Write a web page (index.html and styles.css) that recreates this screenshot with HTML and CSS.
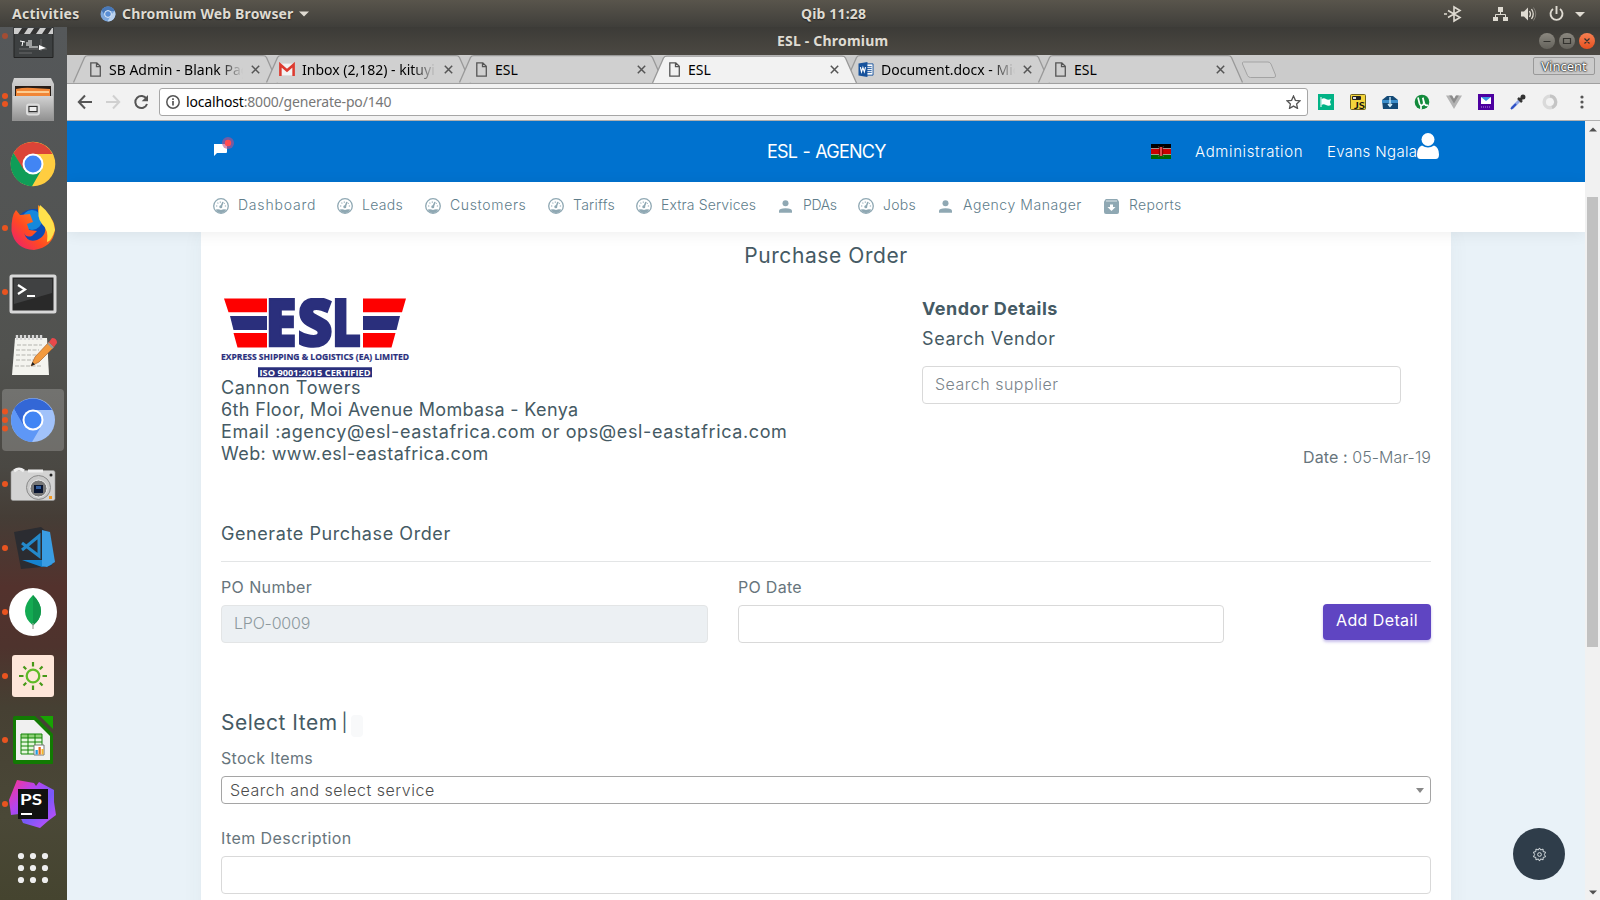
FILE: index.html
```html
<!DOCTYPE html>
<html lang="en">
<head>
<meta charset="utf-8">
<title>ESL - Chromium</title>
<link rel="stylesheet" href="styles.css">
</head>
<body>
<svg class="defs" width="0" height="0">
  <defs>
    <linearGradient id="steel" x1="0" y1="0" x2="0" y2="1"><stop offset="0" stop-color="#d2d2d2"/><stop offset="1" stop-color="#929292"/></linearGradient>
    <linearGradient id="fox" x1="0" y1="1" x2="1" y2="0"><stop offset="0" stop-color="#e8177c"/><stop offset=".4" stop-color="#ff4a22"/><stop offset="1" stop-color="#ffb010"/></linearGradient>
    <linearGradient id="storm" x1="0" y1="0" x2="1" y2="1"><stop offset="0" stop-color="#ff318c"/><stop offset=".35" stop-color="#b345f1"/><stop offset=".6" stop-color="#765af8"/><stop offset="1" stop-color="#d249fc"/></linearGradient>
    <linearGradient id="knob" x1="0" y1="0" x2="0" y2="1"><stop offset="0" stop-color="#8b8880"/><stop offset="1" stop-color="#64625b"/></linearGradient>
    <linearGradient id="knobred" x1="0" y1="0" x2="0" y2="1"><stop offset="0" stop-color="#f78052"/><stop offset="1" stop-color="#e5501f"/></linearGradient>
    <symbol id="tab" viewBox="0 0 206 28"><path d="M0.500 27.500L11.500 2.500Q12.500 .7 15 .7H190Q192.500 .7 193.500 2.500L204.500 27.500"/></symbol>
    <symbol id="file" viewBox="0 0 11 15"><path d="M.8.800h6l3.500 3.500v9.900H.8zM6.500.8v3.800h3.800" fill="none" stroke="#555" stroke-width="1.300"/></symbol>
    <symbol id="close" viewBox="0 0 9 9"><path d="M.8.800l7.400 7.400M8.200.8L.8 8.200" stroke="#555" stroke-width="1.500"/></symbol>
    <symbol id="gauge" viewBox="0 0 16 16"><circle cx="8" cy="8" r="7.300" fill="none" stroke="#8fa8b3" stroke-width="1.300"/><path d="M2.600 11.500Q5.500 10.800 6.500 11.500Q8 12.400 9.500 11.500Q10.500 10.800 13.400 11.500Q11.500 15 8 15Q4.500 15 2.600 11.500z" fill="#8fa8b3"/><path d="M9.800 4.500L8 9" stroke="#8fa8b3" stroke-width="1.600" stroke-linecap="round"/><circle cx="7.800" cy="8.800" r="1.500" fill="#8fa8b3"/><path d="M3 8h1.300M11.800 8h1.300M4.500 4.600l.8.900M7.300 3.500v1.200M11.700 5l-.5.600" stroke="#8fa8b3" stroke-width="1.100"/></symbol>
    <symbol id="person" viewBox="0 0 13 13"><circle cx="6.500" cy="3.300" r="3" fill="#8fa8b3"/><path d="M0 12.700V11Q0 8.200 6.500 8.200T13 11v1.700z" fill="#8fa8b3"/></symbol>
    <symbol id="archive" viewBox="0 0 15 15"><path d="M1.800 0h11.400L15 2.500V13q0 2-2 2H2q-2 0-2-2V2.500z" fill="#8fa8b3"/><path d="M2 2h11" stroke="#dfe7ea"/><path d="M6 5.500h3V8h2.500l-4 4-4-4H6z" fill="#fff"/></symbol>
  </defs>
</svg>

<header class="topbar">
  <span class="activities">Activities</span>
  <svg class="app-icon" viewBox="0 0 16 16"><circle cx="8" cy="8" r="7.500" fill="#7ba6dc"/><path d="M1.500 4.300A7.500 7.500 0 0 1 14.800 5H8L4.600 9z" fill="#4878b8"/><path d="M14.800 5A7.500 7.500 0 0 1 7.500 15.500L11 9z" fill="#b9d2f0"/><circle cx="8" cy="8" r="3.400" fill="#5a8fd6" stroke="#e5effa" stroke-width="1"/></svg>
  <span class="app-name">Chromium Web Browser</span>
  <svg class="caret" viewBox="0 0 10 6"><path d="M0 .5h10L5 5.500z" fill="#dfdbd2"/></svg>
  <span class="clock">Qib 11:28</span>
  <svg class="tray" viewBox="0 0 146 18" fill="none" stroke="#dfdbd2">
    <path d="M2 5.500l12 7-6 3.500V2l6 3.500-12 7M-2 9h3" stroke-width="1.600"/>
    <path d="M52 2h5v5h-5zM47 12h5v4h-5zM57 12h5v4h-5z" fill="#dfdbd2" stroke="none"/><path d="M54.500 7v2.500M49.500 12V9.500h10V12"/>
    <path d="M75 6.500h3l4-4v13l-4-4h-3z" fill="#dfdbd2" stroke="none"/><path d="M83.500 6q2 3 0 6M85.500 4q3.500 5 0 10" stroke-width="1.300"/><path d="M87.500 2.500q4.500 6.500 0 13" stroke="#817e77"/>
    <path d="M107 4a6 6 0 1 0 7 0M110.500 1v8" stroke-width="1.900"/>
    <path d="M129 7h10l-5 5z" fill="#dfdbd2" stroke="none"/>
  </svg>
</header>

<div class="desktop">
  <aside class="dock">
    <svg viewBox="0 0 67 64"><circle cx="5" cy="32" r="3" fill="#a34d34"/><path d="M14 10h39v43.500H14z" fill="#3d4041" stroke="#222"/><path d="M14 24h39v6H14z" fill="#ccc"/><path d="M18 30l4-6h6l-4 6zM30 30l4-6h6l-4 6zM42 30l4-6h6l-4 6z" fill="#333"/><path d="M19 45h28M19 49h13M41 35v12" stroke="#777" stroke-width=".8"/><path d="M20 37l5 1M23 37l-1 5M27 38v4M29 36v6M31 36v6M29 43h9" stroke="#fff" fill="none"/><path d="M39 41l7 3-7 2z" fill="#fff"/></svg>
    <svg viewBox="0 0 67 64"><circle cx="5" cy="28" r="3"/><circle cx="5" cy="36" r="3"/><path d="M14 10h37l3 6v37H12V16z" fill="url(#steel)"/><path d="M15 18h36v12H15z" fill="#271d17"/><path d="M16 21q9-2 17-1l17 1v9H16z" fill="#f18636"/><path d="M17 24h32" stroke="#ffe3b0" stroke-width="1.500"/><path d="M13 28h40v24H13z" fill="url(#steel)"/><rect x="27" y="36.500" width="12" height="10" rx="2" fill="#aaa" stroke="#ddd" stroke-width="2"/><rect x="29" y="38.500" width="8" height="5" fill="#eee" stroke="#333"/></svg>
    <svg viewBox="0 0 67 64"><circle cx="33" cy="32" r="22.300" fill="#ffcd40"/><path d="M13.500 21A22.300 22.300 0 0 1 52.500 22H33V32L23 38z" fill="#db4437"/><path d="M13.500 21A22.300 22.300 0 0 0 32 54.300L42 37 24 38z" fill="#0f9d58"/><circle cx="33" cy="32" r="10.500" fill="#fff"/><circle cx="33" cy="32" r="8.500" fill="#4285f4"/></svg>
    <svg viewBox="0 0 67 64"><circle cx="5" cy="32" r="3"/><circle cx="34" cy="32" r="19" fill="#0b4bb5"/><circle cx="32" cy="24" r="10" fill="#1488dc"/><path d="M16 14l4 5 10-1 3 8-6 2 2 6 8 1-5 5q-6 2-8-3 3 10 13 7 12-5 7-20-7-4-6-15 5 4 9 9 8 6 8 16Q53 51 34 54 15 53 11.500 35 11 20 16 14z" fill="url(#fox)"/><path d="M40 9q13 10 15 25-4 12-8 12 2-12-5-18-6-7-2-19z" fill="#ffe14c"/></svg>
    <svg viewBox="0 0 67 64"><circle cx="5" cy="32" r="3"/><rect x="11" y="16" width="44" height="36" rx="1" fill="#292929" stroke="#d8d8d8" stroke-width="3"/><path d="M14 19h38v14L14 44z" fill="#404142"/><path d="M18 25l7 4.500-7 4.500M27 36h8" stroke="#fff" stroke-width="2.200" fill="none"/></svg>
    <svg viewBox="0 0 67 64"><path d="M15 14h32l2 37H12z" fill="#f4f4ef"/><path d="M17 11v5M21 11v5M25 11v5M29 11v5M33 11v5M37 11v5M41 11v5" stroke="#d8d8d8" stroke-width="2.400"/><path d="M17 21h25M16 26h23M16 31h21M16 36h20M15 42h26" stroke="#b3b3ad" stroke-dasharray="4 1.500"/><path d="M31 42l4-9 14-15 5 5-15 15z" fill="#f29a3e" stroke="#aa632d" stroke-width=".7"/><path d="M49 18l3-4q5 0 5 5l-3 4z" fill="#e9484b"/><path d="M48 19l5 5" stroke="#999" stroke-width="2"/><path d="M31 42l1.500-4 2.500 2.500z" fill="#222"/></svg>
    <svg viewBox="0 0 67 64"><rect x="2" y="1" width="62" height="62" rx="4" fill="#fff" fill-opacity=".2"/><circle cx="5" cy="23.500" r="3"/><circle cx="5" cy="32" r="3"/><circle cx="5" cy="40.500" r="3"/><circle cx="33" cy="32" r="22" fill="#a1c2fa"/><path d="M14 21A22 22 0 0 1 52 22H33V32L23 38z" fill="#3367d6"/><path d="M14 21A22 22 0 0 0 32 54L42 37 24 38z" fill="#5e97f6"/><circle cx="33" cy="32" r="10.500" fill="#fff"/><circle cx="33" cy="32" r="8.500" fill="#4285f4"/></svg>
    <svg viewBox="0 0 67 64"><circle cx="5" cy="32" r="3"/><rect x="11" y="18.500" width="44" height="30" rx="2" fill="#d3d3d3" stroke="#999" stroke-width=".6"/><path d="M14 19q5-4 10 0M28 19h15" stroke="#eee" stroke-width="3" fill="none"/><circle cx="38.500" cy="35.500" r="12" fill="#c9c9c9" stroke="#8a8a8a"/><circle cx="38.500" cy="36.500" r="8.500" fill="#777" stroke="#eee"/><path d="M34 33h9v8h-9z" fill="#0a1530"/><path d="M36 34h5v3h-5z" fill="#315d9e"/><circle cx="51" cy="23" r="1.500" fill="#222"/><path d="M49 44h3v3h-3z" fill="#f49a21"/></svg>
    <svg viewBox="0 0 67 64"><circle cx="5" cy="32" r="3"/><path d="M14 16l27-5 5 4 6 35-31 3z" fill="#2b2c31"/><path d="M22 27l17 13V20L22 34" fill="none" stroke="#2489ca" stroke-width="3"/><path d="M42 44l7 1 3 4-10 2-20-7z" fill="#1583d0"/><path d="M42 14l8 2 5 30-8 5-5-1z" fill="#3a9de3"/></svg>
    <svg viewBox="0 0 67 64"><circle cx="5" cy="32" r="3"/><circle cx="33" cy="32" r="24" fill="#fff"/><path d="M33 15q8 8 8 16t-8 14.500Q25 39 25 31t8-16z" fill="#13aa52"/><path d="M33 15q8 8 8 16t-8 14.500z" fill="#10964a"/><path d="M33 43v6" stroke="#a0a098" stroke-width="1.200"/></svg>
    <svg viewBox="0 0 67 64"><circle cx="5" cy="32" r="3"/><rect x="12" y="11" width="42" height="42" rx="3" fill="#fee6d9"/><circle cx="33" cy="32" r="6.300" fill="none" stroke="#5fbb28" stroke-width="2.300"/><path d="M33 18v4.500M33 41.500V46M19 32h4.500M42.500 32H47M23.500 22.500l2.700 2.700M39.800 38.800l2.700 2.700M42.500 22.500l-2.700 2.700M26.200 38.800l-2.700 2.700" stroke="#469818" stroke-width="2.200"/></svg>
    <svg viewBox="0 0 67 64"><circle cx="5" cy="32" r="3"/><path d="M15 8h20l18 18v29q0 1-1 1H15q-2 0-2-2V10q0-2 2-2z" fill="#127a03"/><path d="M40 8h13v13z" fill="#18a303"/><path d="M16 12h18l16 16v24H16z" fill="#f0f0f0"/><path d="M21 26h21v20H21z" fill="#e5f7dd"/><path d="M21 26h21v4H21z" fill="#8fd077"/><path d="M21 26h21v20H21zM28 26v20M35 26v20M21 30h21M21 34h21M21 38h21M21 42h21" fill="none" stroke="#138407"/><path d="M34 37h10v10H34z" fill="#fff" stroke="#777"/><path d="M35.500 42h2.300v4.500h-2.300z" fill="#2399df"/><path d="M38.500 39h2.300v7.500h-2.300z" fill="#e96a1c"/><path d="M41.500 41h2v5.500h-2z" fill="#f3b52a"/></svg>
    <svg viewBox="0 0 67 64"><circle cx="5" cy="32" r="3"/><path d="M17 8l17 3 2 3 3-4 15 8 0 12 2 13-8 6-8 7-17-5-4-9-8 1-2-15z" fill="url(#storm)"/><path d="M18 17h30v30H18z" fill="#111"/><text class="ps" x="20" y="33" textLength="22" lengthAdjust="spacingAndGlyphs">PS</text><path d="M21 42h11" stroke="#fff" stroke-width="2"/></svg>
    <svg class="grid" viewBox="0 0 67 64"><circle cx="21" cy="20" r="3.100"/><circle cx="33" cy="20" r="3.100"/><circle cx="45" cy="20" r="3.100"/><circle cx="21" cy="32" r="3.100"/><circle cx="33" cy="32" r="3.100"/><circle cx="45" cy="32" r="3.100"/><circle cx="21" cy="44" r="3.100"/><circle cx="33" cy="44" r="3.100"/><circle cx="45" cy="44" r="3.100"/></svg>
  </aside>

  <section class="window">
    <div class="titlebar">
      <span class="win-title">ESL - Chromium</span>
      <svg class="win-buttons" viewBox="0 0 58 18"><circle cx="9" cy="9" r="8" fill="url(#knob)"/><circle cx="29" cy="9" r="8" fill="url(#knob)"/><circle cx="49" cy="9" r="8" fill="url(#knobred)"/><path d="M5.500 9.500h7M25.500 6.500h7v5h-7zM46.500 6.500l5 5M51.500 6.500l-5 5" fill="none" stroke="#33322e" stroke-width="1.200"/></svg>
    </div>

    <div class="tabs">
      <div class="tab"><svg class="tab-shape"><use href="#tab"/></svg><svg class="fav"><use href="#file"/></svg><span class="tab-title long">SB Admin - Blank Page</span><svg class="x"><use href="#close"/></svg></div>
      <div class="tab"><svg class="tab-shape"><use href="#tab"/></svg><svg class="fav wide" viewBox="0 0 15 12"><path d="M.5.500h14v11H.5z" fill="#f3f3f3"/><path d="M1.300 12V1.500L7.500 7l6.200-5.500V12" fill="none" stroke="#dd3b30" stroke-width="2.400"/></svg><span class="tab-title long">Inbox (2,182) - kituyi</span><svg class="x"><use href="#close"/></svg></div>
      <div class="tab"><svg class="tab-shape"><use href="#tab"/></svg><svg class="fav"><use href="#file"/></svg><span class="tab-title">ESL</span><svg class="x"><use href="#close"/></svg></div>
      <div class="tab active"><svg class="tab-shape"><use href="#tab"/></svg><svg class="fav"><use href="#file"/></svg><span class="tab-title">ESL</span><svg class="x"><use href="#close"/></svg></div>
      <div class="tab"><svg class="tab-shape"><use href="#tab"/></svg><svg class="fav wide" viewBox="0 0 16 16"><path d="M8 2h7.500v12H8z" fill="#fff" stroke="#17529c"/><path d="M9 5h5M9 7h5M9 9h5M9 11h5" stroke="#17529c"/><path d="M0 1.500L9.500 0v16L0 14.500z" fill="#17529c"/><path d="M2 5.500L3.200 10.500 4.700 6l1.500 4.500L7.500 5.500" fill="none" stroke="#fff" stroke-width="1.200"/></svg><span class="tab-title long">Document.docx - Mic</span><svg class="x"><use href="#close"/></svg></div>
      <div class="tab"><svg class="tab-shape"><use href="#tab"/></svg><svg class="fav"><use href="#file"/></svg><span class="tab-title">ESL</span><svg class="x"><use href="#close"/></svg></div>
      <svg class="new-tab" viewBox="0 0 36 18"><path d="M2.500 1H27q2 0 3 2l4.500 11q.5 2.500-1.500 2.500H9.500q-2 0-3-2L1.500 3Q1 1 2.500 1z" fill="#d0d0d0" stroke="#a3a3a3"/></svg>
      <span class="profile">Vincent</span>
    </div>

    <div class="toolbar">
      <svg class="nav-buttons" viewBox="0 0 74 16" fill="none" stroke-width="2"><path d="M15 8H2M8 1.500L1.800 8 8 14.500" stroke="#555"/><path d="M29 8h13M36 1.500L42.200 8 36 14.500" stroke="#d0d0d0"/><path d="M69.500 5A6 6 0 1 0 70 10" stroke="#555"/><path d="M71 1v6.300h-6.300z" fill="#555"/></svg>
      <div class="url">
        <svg class="info" viewBox="0 0 14 14"><circle cx="7" cy="7" r="6.200" fill="none" stroke="#555" stroke-width="1.500"/><path d="M7 6v4.500M7 3.200v1.700" stroke="#555" stroke-width="1.700"/></svg>
        <span class="url-text"><b>localhost</b>:8000/generate-po/140</span>
        <svg class="star" viewBox="0 0 15 14"><path d="M7.500 1l1.900 4.300 4.600.5-3.400 3.100.9 4.500-4-2.300-4 2.300.9-4.500L1 5.800l4.600-.5z" fill="none" stroke="#555" stroke-width="1.300"/></svg>
      </div>
      <div class="extensions">
        <svg viewBox="0 0 16 16"><path d="M0 0h16v16H0z" fill="#02b386"/><path d="M3 3v10" stroke="#fff"/><path d="M3.500 5q2.500-1.300 4.500 0t5 0l-1 3 1 3q-2.500 1.300-5 0t-4.500 0z" fill="#fff"/></svg>
        <svg viewBox="0 0 16 16"><rect x=".5" y=".5" width="15" height="15" rx="1" fill="#f3d43c" stroke="#6f6220"/><rect x="2" y="2" width="9" height="4" rx="1" fill="#222"/><path d="M3 3h3v2H3z" fill="#ddd"/><text class="js" x="4" y="14.500" textLength="11" lengthAdjust="spacingAndGlyphs">JS</text></svg>
        <svg viewBox="0 0 16 16"><path d="M0 6l5-4h6l5 4v9H1z" fill="#144a77"/><path d="M0 6h16v3H0z" fill="#3d8fcc"/><path d="M8 3v9M6 10l2 2.500 2-2.500" fill="none" stroke="#d7f3ff" stroke-width="1.300"/></svg>
        <svg viewBox="0 0 16 16"><circle cx="8" cy="8" r="7.300" fill="#138a3c"/><path d="M4 3.500l1.500 6q.8 2.500 3 1.500 2-1 1-4L8.800 3.800l1.500 5.400q1 3 4 2M7 11.500V15" fill="none" stroke="#fff" stroke-width="1.700"/></svg>
        <svg viewBox="0 0 16 16"><path d="M0 1.500h6L8 5l2-3.500h6L8 15z" fill="#b4b4b4"/><path d="M3.200 1.500H6L8 5l2-3.500h2.800L8 9.500z" fill="#8b8b8b"/></svg>
        <svg viewBox="0 0 16 16"><path d="M0 0h16v16H0z" fill="#4d00a0"/><path d="M3 3h10v7H3z" fill="#fff"/><path d="M3 3h10L8 7z" fill="#3a94df"/><path d="M3 13h10" stroke="#b78be0" stroke-dasharray="1 1"/></svg>
        <svg viewBox="0 0 16 16"><path d="M2 14L10 6" stroke="#8fa6e6" stroke-width="3"/><path d="M1 15l5-5" stroke="#2c4fc4" stroke-width="2"/><path d="M8 4l4 4M10 6l3.500-3.500" stroke="#333" stroke-width="2.500"/><circle cx="13" cy="3" r="2.500" fill="#333"/></svg>
        <svg viewBox="0 0 16 16"><circle cx="8" cy="8" r="5.800" fill="none" stroke="#dadada" stroke-width="3.500"/><path d="M8 2a6 6 0 0 1 2 11.500" fill="none" stroke="#c4c4c4" stroke-width="3"/></svg>
        <svg viewBox="0 0 16 16" fill="#555"><circle cx="8" cy="3" r="1.600"/><circle cx="8" cy="8" r="1.600"/><circle cx="8" cy="13" r="1.600"/></svg>
      </div>
    </div>

    <div class="viewport">
      <div class="page">
        <header class="brandbar">
          <svg class="chat" viewBox="0 0 22 22"><path d="M1 7h12q1 0 1 1v7q0 1-1 1H4l-3 3z" fill="#fff"/><circle cx="15" cy="6" r="6" fill="#c04f86" opacity=".6"/><circle cx="15" cy="6" r="3.200" fill="#ff4b52"/></svg>
          <span class="brand">ESL - AGENCY</span>
          <svg class="flag" viewBox="0 0 20 15"><path d="M0 0h20v5H0z" fill="#000"/><path d="M0 5h20v5H0z" fill="#c00"/><path d="M0 10h20v5H0z" fill="#060"/><path d="M0 4.500h20M0 10.500h20" stroke="#c9b5b0" stroke-width=".8"/><path d="M7.500 2l5 11M12.500 2l-5 11" stroke="#777" stroke-width=".5"/><ellipse cx="10" cy="7.500" rx="2.300" ry="4.700" fill="#8b0000"/><path d="M10 3v9" stroke="#f66" stroke-width="1.500"/></svg>
          <span class="admin">Administration</span>
          <span class="user">Evans Ngala</span>
          <svg class="avatar" viewBox="0 0 22 26"><circle cx="11" cy="6.500" r="6.500" fill="#fff"/><path d="M5 12.500q6 4 12 0 5 2 5 9 0 4.500-3.500 4.500h-15Q0 26 0 21.500q0-7 5-9z" fill="#fff"/></svg>
        </header>

        <nav class="menu">
          <a class="m1"><svg><use href="#gauge"/></svg>Dashboard</a>
          <a class="m2"><svg><use href="#gauge"/></svg>Leads</a>
          <a class="m3"><svg><use href="#gauge"/></svg>Customers</a>
          <a class="m4"><svg><use href="#gauge"/></svg>Tariffs</a>
          <a class="m5"><svg><use href="#gauge"/></svg>Extra Services</a>
          <a class="m6"><svg class="sm"><use href="#person"/></svg>PDAs</a>
          <a class="m7"><svg><use href="#gauge"/></svg>Jobs</a>
          <a class="m8"><svg class="sm"><use href="#person"/></svg>Agency Manager</a>
          <a class="m9"><svg class="md"><use href="#archive"/></svg>Reports</a>
        </nav>

        <main class="card">
          <h1 class="page-title">Purchase Order</h1>
          <div class="intro">
            <div class="company">
              <svg class="logo" viewBox="0 0 190 80">
                <path d="M3 .5h43v13.700H7.500zM12.500 35H46v14.500H16.500zM142 .5h43l-4 13.700h-39zM142 35h32.500l-4 14.500H142z" fill="#fe0000"/>
                <path d="M9 18h37v14H12.500zM142 18h37l-3.500 14H142z" fill="#2a2f7c"/>
                <g class="logo-letters"><text x="44.500" y="48.200" textLength="31" lengthAdjust="spacingAndGlyphs">E</text><text x="76.500" y="48.200" textLength="35" lengthAdjust="spacingAndGlyphs">S</text><text x="111" y="48.200" textLength="29" lengthAdjust="spacingAndGlyphs">L</text></g>
                <text class="logo-line" x="0" y="62" textLength="188" lengthAdjust="spacingAndGlyphs">EXPRESS SHIPPING &amp; LOGISTICS (EA) LIMITED</text>
                <path d="M37 69.200h114v10H37z" fill="#2a2f7c"/>
                <text class="logo-iso" x="38.500" y="77.500" textLength="111" lengthAdjust="spacingAndGlyphs">ISO 9001:2015 CERTIFIED</text>
              </svg>
              <p class="address"><span class="a1">Cannon Towers</span><span class="a2">6th Floor, Moi Avenue Mombasa - Kenya</span><span class="a3">Email :agency@esl-eastafrica.com or ops@esl-eastafrica.com</span><span class="a4">Web: www.esl-eastafrica.com</span></p>
            </div>
            <div class="vendor">
              <h2 class="vendor-title">Vendor Details</h2>
              <label class="vendor-label">Search Vendor</label>
              <div class="field vendor-input"><span>Search supplier</span></div>
              <p class="date"><span class="date-key">Date :</span> 05-Mar-19</p>
            </div>
          </div>

          <h3 class="section">Generate Purchase Order</h3>
          <div class="po-row">
            <div class="po-col"><label class="l-num">PO Number</label><div class="field disabled"><span>LPO-0009</span></div></div>
            <div class="po-col second"><label class="l-date">PO Date</label><div class="field"></div></div>
            <button class="add">Add Detail</button>
          </div>

          <h2 class="select-title"><span>Select Item</span><i class="bar">|</i><i class="chip"></i></h2>
          <label class="l-stock">Stock Items</label>
          <div class="select"><span>Search and select service</span><svg viewBox="0 0 8 5"><path d="M0 0h8L4 5z" fill="#888"/></svg></div>
          <label class="l-desc">Item Description</label>
          <div class="field"></div>
        </main>
      </div>
      <div class="scrollbar"><svg viewBox="0 0 8 5"><path d="M0 4.500h8L4 .5z" fill="#505050"/></svg><div class="thumb"></div><svg class="down" viewBox="0 0 8 5"><path d="M0 .5h8L4 4.500z" fill="#505050"/></svg></div>
      <div class="fab"><svg viewBox="0 0 16 16" fill="none" stroke="#dfe5e8"><path d="M8 1l1.200 2.200 2.600-1 .1 2.700 2.600.6L13.200 8l1.300 2.400-2.600.7-.1 2.600-2.600-1L8 15l-1.200-2.300-2.600 1-.1-2.600-2.600-.7L2.800 8 1.500 5.500l2.600-.6.1-2.700 2.600 1z"/><circle cx="8" cy="8" r="2"/></svg></div>
    </div>
  </section>
</div>
</body>
</html>
```
FILE: styles.css
```css
* { box-sizing: border-box; }
body { margin: 0; width: 1600px; height: 900px; overflow: hidden; font-family: Inter, "Open Sans", sans-serif; color: #67757c; white-space: nowrap; }
h1, h2, h3, p { margin: 0; font-weight: 400; }
svg { display: block; flex: none; }
i { font-style: normal; }
.defs { position: absolute; }

/* desktop shell */
.topbar { position: relative; height: 27px; display: flex; align-items: center; background: linear-gradient(#59554c, #3f3e3a); color: #dfdbd2; font: 700 14px/27px "Noto Sans", sans-serif; text-shadow: 0 1px 1px #222; }
.activities { width: 88px; padding-left: 12px; letter-spacing: .25px; }
.app-icon { width: 16px; height: 16px; margin: 0 6px 0 12px; }
.app-name { width: 173px; letter-spacing: .15px; }
.caret { width: 10px; height: 6px; margin-left: 4px; }
.clock { margin-left: 492px; letter-spacing: .15px; }
.tray { width: 146px; height: 18px; margin-left: auto; margin-right: 8px; overflow: visible; }
.desktop { display: flex; height: 873px; }
.dock { width: 67px; overflow: hidden; fill: #e95420; background: linear-gradient(#55585a 0, #51524f 330px, #4a4843 440px, #453d36 490px, #53322d 560px, #4e332d 620px, #464033 680px, #4a4837 790px, #45442f); }
.dock svg { width: 67px; height: 64px; }
.dock svg:first-child { margin-top: -23px; }
.dock .grid { fill: #eee; }
.ps { font: 700 16px Lato, sans-serif; fill: #fff; }
.window { width: 1533px; display: flex; flex-direction: column; }
.titlebar { height: 28px; display: flex; align-items: center; background: linear-gradient(#3c3b37, #4b4842); color: #dfdbd2; font: 700 14px/28px "Noto Sans", sans-serif; }
.win-title { width: 116px; margin-left: 710px; letter-spacing: .2px; }
.win-buttons { width: 58px; height: 18px; margin-left: auto; margin-right: 4px; }

/* browser chrome */
.tabs { height: 29px; display: flex; padding-left: 6px; background: #cbcbcb; border-bottom: 1px solid #a0a0a0; font: 14px/28px "Noto Sans", sans-serif; color: #000; }
.tab { position: relative; width: 193px; height: 28px; display: flex; align-items: center; padding-left: 17px; flex: none; }
.tab-shape { position: absolute; left: 0; top: 0; width: 206px; height: 28px; fill: #d0d0d0; stroke: #999; stroke-width: 1.300; }
.tab.active { z-index: 1; }
.tab.active .tab-shape { fill: #f2f2f2; height: 29px; }
.fav { position: relative; width: 11px; height: 15px; }
.fav.wide { width: 16px; margin-left: -4px; margin-right: -1px; }
.tab-title { position: relative; margin-left: 8px; width: 134px; line-height: 26px; padding-top: 2px; overflow: hidden; }
.long { -webkit-mask-image: linear-gradient(90deg, #000 110px, transparent 134px); mask-image: linear-gradient(90deg, #000 110px, transparent 134px); }
.x { position: relative; width: 9px; height: 9px; margin-left: 8px; }
.new-tab { width: 36px; height: 18px; margin: 6px 0 0 10px; }
.profile { width: 62px; height: 18px; margin: 2px 5px 0 auto; border: 1px solid #999; border-radius: 2px; text-align: center; font-size: 13px; line-height: 16px; color: #fff; text-shadow: 0 0 2px #111, 0 0 2px #222, 0 0 1px #333; }
.toolbar { height: 37px; display: flex; align-items: center; background: #f2f2f2; border-bottom: 1px solid #b0b0b0; }
.nav-buttons { width: 74px; height: 16px; margin-left: 10px; }
.url { display: flex; align-items: center; width: 1149px; height: 28px; margin-left: 8px; padding: 0 6px; background: #fff; border: 1px solid #a6a6a6; border-radius: 3px; font: 14px/26px "Noto Sans", sans-serif; color: #777; }
.url b { font-weight: 400; color: #000; }
.info { width: 14px; height: 14px; }
.url-text { margin-left: 6px; letter-spacing: -.17px; }
.star { width: 15px; height: 14px; margin-left: auto; }
.extensions { display: flex; gap: 16px; margin-left: 10px; }
.extensions svg { width: 16px; height: 16px; }
.js { font: 700 10px Lato, sans-serif; fill: #111; }

/* web page */
.viewport { position: relative; display: flex; height: 779px; }
.page { width: 1518px; background: #e9f2f8; overflow: hidden; }
.brandbar { display: flex; align-items: center; height: 61px; padding-left: 146px; background: #0072cf; color: #fff; font-weight: 300; }
.chat { width: 22px; height: 22px; margin-top: -7px; }
.brand { width: 383px; margin-left: 532px; font-size: 18px; font-weight: 400; line-height: 61px; height: 61px; letter-spacing: -.78px; word-spacing: 1px; }
.flag { width: 20px; height: 15px; margin-left: 1px; }
.admin { width: 132px; margin-left: 24px; font-size: 15px; letter-spacing: .62px; }
.user { width: 90px; font-size: 15px; letter-spacing: .35px; }
.avatar { width: 22px; height: 26px; margin-top: -11px; }
.menu { position: relative; z-index: 1; display: flex; height: 50px; padding-left: 146px; background: #fff; box-shadow: 0 2px 14px rgba(0, 0, 0, .07); }
.menu a { display: flex; align-items: center; color: #607d8b; font-size: 14px; font-weight: 300; line-height: 46px; height: 46px; }
.menu svg { width: 16px; height: 16px; margin-right: 9px; margin-top: 2px; }
.menu .sm { width: 13px; height: 13px; margin-right: 11px; }
.menu .md { width: 15px; height: 15px; margin-right: 10px; }
.m1 { width: 124px; letter-spacing: .8px; }
.m2 { width: 88px; letter-spacing: .3px; }
.m3 { width: 123px; letter-spacing: .65px; }
.m4 { width: 88px; letter-spacing: .25px; }
.m5 { width: 143px; letter-spacing: .14px; }
.m6 { width: 79px; letter-spacing: -.4px; }
.m7 { width: 81px; letter-spacing: .25px; }
.m8 { width: 165px; letter-spacing: .55px; }
.m9 { letter-spacing: .36px; }

.card { width: 1250px; height: 700px; margin-left: 134px; padding: 0 20px; background: #fff; box-shadow: 0 0 20px rgba(50, 80, 80, .05); }
.page-title { height: 66px; padding-top: 11px; text-align: center; font-size: 21px; line-height: 26px; letter-spacing: .58px; color: #455a64; }
.intro { display: flex; height: 219px; }
.company { width: 701px; }
.logo { width: 190px; height: 80px; }
.logo-letters { font: 800 65px "Open Sans", sans-serif; fill: #2a2f7c; stroke: #2a2f7c; stroke-width: 2.500; }
.logo-line { font: 700 9.400px "Open Sans", sans-serif; fill: #2a2f7c; stroke: #2a2f7c; stroke-width: .2; }
.logo-iso { font: 700 9.400px "Open Sans", sans-serif; fill: #fff; }
.address { margin-top: -1px; font-size: 18px; line-height: 22px; color: #455a64; }
.address span { display: block; }
.a1 { letter-spacing: .55px; }
.a2 { letter-spacing: .35px; }
.a3 { letter-spacing: .61px; }
.a4 { letter-spacing: .42px; }
.vendor { width: 509px; }
.vendor-title { font-size: 18px; font-weight: 700; line-height: 22px; letter-spacing: .5px; color: #455a64; }
.vendor-label { display: block; margin-top: 8px; font-size: 18px; line-height: 22px; letter-spacing: .58px; color: #455a64; }
.field { height: 38px; padding: 0 12px; border: 1px solid #d9d9d9; border-radius: 4px; font-size: 16px; line-height: 35px; background: #fff; }
.vendor-input { width: 479px; margin-top: 16px; color: #7b848b; font-weight: 300; letter-spacing: .5px; }
.date { margin-top: 41px; text-align: right; font-size: 16px; line-height: 24px; font-weight: 300; letter-spacing: .08px; }
.date-key { font-weight: 400; }
.section { height: 45px; padding-top: 6px; border-bottom: 1px solid #e3e5e6; font-size: 18px; line-height: 22px; letter-spacing: .58px; color: #455a64; }
.po-row { display: flex; height: 145px; padding-top: 13px; }
.po-col { width: 487px; margin-right: 30px; }
.po-col.second { width: 486px; margin-right: 0; }
label { display: block; font-size: 16px; line-height: 24px; }
.po-col label { margin-bottom: 6px; }
.l-num { letter-spacing: .4px; }
.l-date { letter-spacing: .3px; }
.disabled { background: #ecf0f3; border-color: #e3e5e6; color: #8d999e; font-weight: 300; letter-spacing: -.2px; }
.add { width: 108px; height: 36px; margin: 29px 0 0 auto; padding: 0 0 3px; border: 0; border-radius: 4px; background: #5f45c2; color: #fff; font: 16px/33px Inter, sans-serif; letter-spacing: .4px; box-shadow: 0 2px 3px rgba(95, 69, 194, .35); }
.select-title { display: flex; height: 39px; padding-top: 3px; font-size: 21px; line-height: 26px; letter-spacing: .5px; color: #455a64; }
.bar { margin-left: 4px; width: 9px; font-size: 18px; line-height: 25px; }
.chip { width: 12px; height: 22px; margin-top: 5px; border-radius: 4px; background: #f8f9fa; }
.l-stock { letter-spacing: .3px; }
.select { display: flex; align-items: center; justify-content: space-between; height: 28px; margin: 6px 0 10px; padding: 0 6px 0 8px; border: 1px solid #a5a5a5; border-radius: 4px; font-size: 16px; line-height: 26px; color: #4d4d4d; font-weight: 300; letter-spacing: .5px; }
.select svg { width: 8px; height: 5px; }
.l-desc { margin: 22px 0 6px; letter-spacing: .42px; }
.scrollbar { width: 15px; display: flex; flex-direction: column; align-items: center; background: #f1f1f1; }
.scrollbar svg { width: 8px; height: 5px; margin-top: 6px; }
.thumb { width: 11px; height: 450px; margin-top: 65px; background: #c1c1c1; }
.scrollbar .down { margin-top: auto; margin-bottom: 5px; }
.fab { position: absolute; left: 1446px; top: 707px; z-index: 2; width: 52px; height: 52px; border-radius: 50%; background: #2f3d4a; display: flex; align-items: center; justify-content: center; }
.fab svg { width: 15px; height: 15px; }
```
